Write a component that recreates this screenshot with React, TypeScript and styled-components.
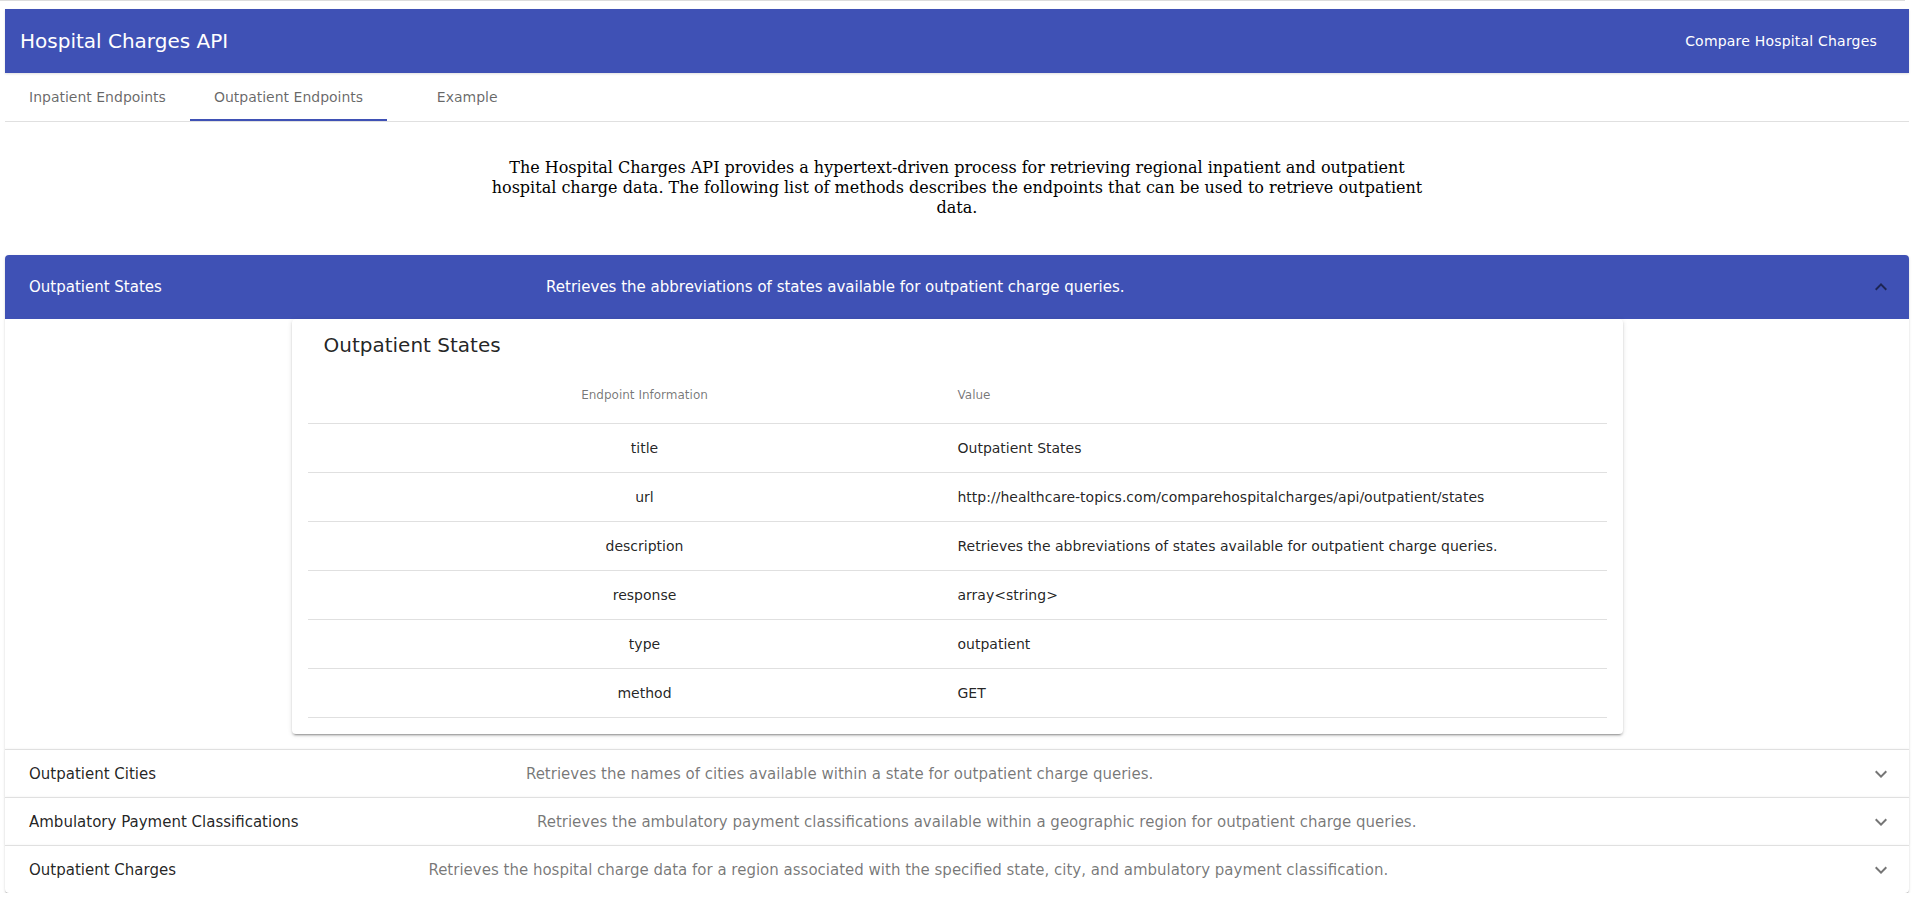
import React from "react";
import styled, { createGlobalStyle } from "styled-components";

const GlobalStyle = createGlobalStyle`
  html, body { margin: 0; padding: 0; background: #ffffff; }
  body {
    font-family: "DejaVu Sans", Verdana, sans-serif;
    color: rgba(0, 0, 0, 0.87);
  }
  * { box-sizing: border-box; }
`;

const TopRule = styled.div`
  height: 1px;
  width: 1905px;
  background: #dcdcdc;
`;

const Shell = styled.div`
  padding: 8px 4px 0 5px;
`;

const AppBar = styled.header`
  height: 64px;
  background: #3f51b5;
  color: #ffffff;
  display: flex;
  align-items: center;
  justify-content: space-between;
  padding: 0 32px 0 15px;
  box-shadow: 0 1px 2px rgba(0, 0, 0, 0.12);
`;

const Brand = styled.h1`
  margin: 0;
  font-size: 20px;
  font-weight: 400;
  line-height: 32px;
`;

const NavLink = styled.a`
  color: #ffffff;
  font-size: 14px;
  line-height: 20px;
  letter-spacing: 0.2px;
  text-decoration: none;
`;

const TabBar = styled.nav`
  display: flex;
  height: 49px;
  border-bottom: 1px solid #e0e0e0;
`;

const Tab = styled.button<{ $active?: boolean }>`
  min-width: 160px;
  height: 48px;
  padding: 0 24px;
  border: 0;
  background: none;
  font-family: "DejaVu Sans", Verdana, sans-serif;
  font-size: 14px;
  color: rgba(0, 0, 0, 0.6);
  cursor: pointer;
  box-shadow: ${(p) => (p.$active ? "inset 0 -2px 0 #3f51b5" : "none")};
`;

const Intro = styled.p`
  font-family: "DejaVu Serif", "Liberation Serif", serif;
  font-size: 16px;
  line-height: 20px;
  text-align: center;
  color: #000000;
  max-width: 932px;
  margin: 36px auto 37px auto;
`;

const AccordionList = styled.div`
  display: flex;
  flex-direction: column;
`;

const AccordionItem = styled.section<{ $first?: boolean; $last?: boolean }>`
  background: #ffffff;
  box-shadow: 0px 2px 1px -1px rgba(0, 0, 0, 0.2), 0px 1px 1px 0px rgba(0, 0, 0, 0.14),
    0px 1px 3px 0px rgba(0, 0, 0, 0.12);
  border-top: ${(p) => (p.$first ? "0" : "1px solid rgba(0, 0, 0, 0.12)")};
  border-radius: ${(p) => (p.$first ? "4px 4px 0 0" : p.$last ? "0 0 4px 4px" : "0")};
  position: relative;
`;

const Summary = styled.div<{ $open?: boolean }>`
  display: flex;
  align-items: center;
  min-height: ${(p) => (p.$open ? "64px" : "47px")};
  padding: 0 16px 0 24px;
  background: ${(p) => (p.$open ? "#3f51b5" : "transparent")};
  color: ${(p) => (p.$open ? "#ffffff" : "rgba(0, 0, 0, 0.87)")};
  border-radius: ${(p) => (p.$open ? "4px 4px 0 0" : "0")};
`;

const SummaryContent = styled.div`
  flex: 1 1 auto;
  display: flex;
  align-items: center;
  margin-right: -24px;
  font-size: 15px;
  line-height: 24px;
`;

const Heading = styled.span`
  flex: 1 1 auto;
  white-space: nowrap;
`;

const SecondaryHeading = styled.span<{ $open?: boolean }>`
  flex: 2 1 auto;
  white-space: nowrap;
  color: ${(p) => (p.$open ? "#ffffff" : "rgba(0, 0, 0, 0.54)")};
`;

const ExpandIcon = styled.svg<{ $open?: boolean }>`
  width: 24px;
  height: 24px;
  flex: 0 0 24px;
  fill: rgba(0, 0, 0, 0.54);
  transform: ${(p) => (p.$open ? "rotate(180deg)" : "none")};
`;

const Details = styled.div`
  display: flex;
  justify-content: center;
  padding: 0 16px 15px 16px;
`;

const Card = styled.div`
  width: 1331px;
  padding: 0 16px 16px 16px;
  background: #ffffff;
  border-radius: 4px;
  box-shadow: 0px 3px 1px -2px rgba(0, 0, 0, 0.2), 0px 2px 2px 0px rgba(0, 0, 0, 0.14),
    0px 1px 5px 0px rgba(0, 0, 0, 0.12);
`;

const CardTitle = styled.h2`
  margin: 0;
  padding: 10px 16px 6px 16px;
  font-size: 20px;
  font-weight: 400;
  line-height: 32px;
  color: rgba(0, 0, 0, 0.87);
`;

const InfoRow = styled.div<{ $head?: boolean }>`
  display: grid;
  grid-template-columns: 650px 1fr;
  align-items: center;
  height: ${(p) => (p.$head ? "57px" : "49px")};
  border-bottom: 1px solid rgb(224, 224, 224);
  font-size: ${(p) => (p.$head ? "12px" : "14px")};
  line-height: 20px;
  color: ${(p) => (p.$head ? "rgba(0, 0, 0, 0.54)" : "rgba(0, 0, 0, 0.87)")};
`;

const KeyCell = styled.div`
  padding-left: 24px;
  text-align: center;
`;

const ValueCell = styled.div`
  padding-right: 16px;
  text-align: left;
`;

const ChevronPath = "M16.59 8.59 12 13.17 7.41 8.59 6 10l6 6 6-6z";

const endpoints = [
  {
    title: "Outpatient States",
    description: "Retrieves the abbreviations of states available for outpatient charge queries.",
  },
  {
    title: "Outpatient Cities",
    description:
      "Retrieves the names of cities available within a state for outpatient charge queries.",
  },
  {
    title: "Ambulatory Payment Classifications",
    description:
      "Retrieves the ambulatory payment classifications available within a geographic region for outpatient charge queries.",
  },
  {
    title: "Outpatient Charges",
    description:
      "Retrieves the hospital charge data for a region associated with the specified state, city, and ambulatory payment classification.",
  },
];

const info: [string, string][] = [
  ["title", "Outpatient States"],
  ["url", "http://healthcare-topics.com/comparehospitalcharges/api/outpatient/states"],
  ["description", "Retrieves the abbreviations of states available for outpatient charge queries."],
  ["response", "array<string>"],
  ["type", "outpatient"],
  ["method", "GET"],
];

export default function App() {
  return (
    <>
      <GlobalStyle />
      <TopRule />
      <Shell>
        <AppBar>
          <Brand>Hospital Charges API</Brand>
          <NavLink href="#">Compare Hospital Charges</NavLink>
        </AppBar>
        <TabBar>
          <Tab>Inpatient Endpoints</Tab>
          <Tab $active>Outpatient Endpoints</Tab>
          <Tab>Example</Tab>
        </TabBar>
        <Intro>
          The Hospital Charges API provides a hypertext-driven process for retrieving regional
          inpatient and outpatient hospital charge data. The following list of methods describes
          the endpoints that can be used to retrieve outpatient data.
        </Intro>
        <AccordionList>
          {endpoints.map((ep, i) => {
            const open = i === 0;
            return (
              <AccordionItem key={ep.title} $first={i === 0} $last={i === endpoints.length - 1}>
                <Summary $open={open}>
                  <SummaryContent>
                    <Heading>{ep.title}</Heading>
                    <SecondaryHeading $open={open}>{ep.description}</SecondaryHeading>
                  </SummaryContent>
                  <ExpandIcon $open={open} viewBox="0 0 24 24">
                    <path d={ChevronPath} />
                  </ExpandIcon>
                </Summary>
                {open && (
                  <Details>
                    <Card>
                      <CardTitle>{ep.title}</CardTitle>
                      <InfoRow $head>
                        <KeyCell>Endpoint Information</KeyCell>
                        <ValueCell>Value</ValueCell>
                      </InfoRow>
                      {info.map(([k, v]) => (
                        <InfoRow key={k}>
                          <KeyCell>{k}</KeyCell>
                          <ValueCell>{v}</ValueCell>
                        </InfoRow>
                      ))}
                    </Card>
                  </Details>
                )}
              </AccordionItem>
            );
          })}
        </AccordionList>
      </Shell>
    </>
  );
}
